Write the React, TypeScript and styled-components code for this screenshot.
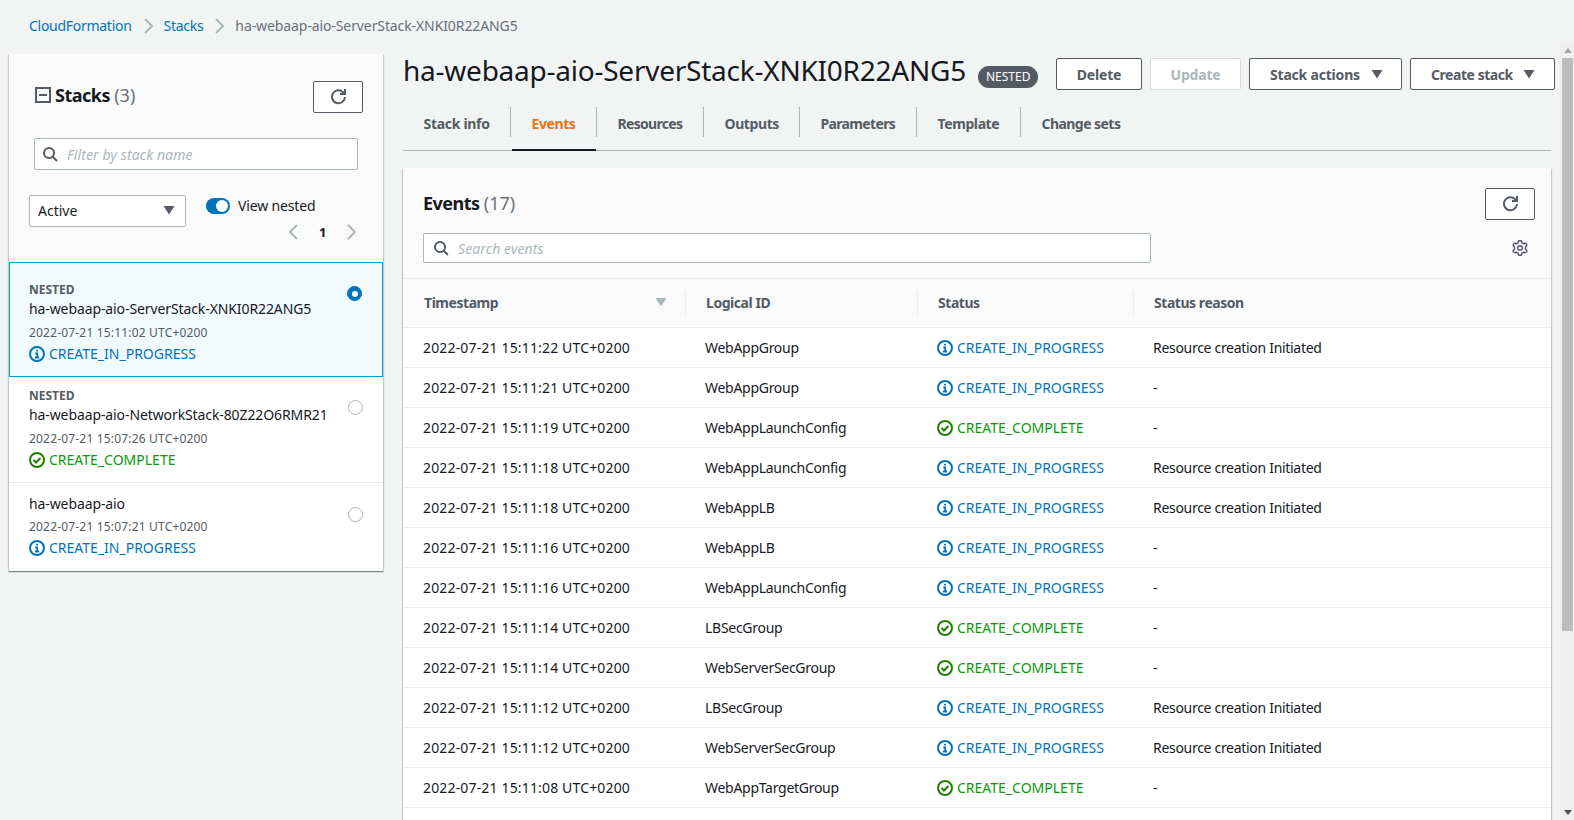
import React from "react";
import styled, { createGlobalStyle } from "styled-components";
import { Settings } from "lucide-react";

const Global = createGlobalStyle`
  html, body { margin: 0; padding: 0; height: 100%; overflow: hidden; }
  body { background: #f2f3f3; font-family: "Noto Sans", "Open Sans", sans-serif; font-size: 14px; color: #16191f; }
  * { box-sizing: border-box; }
`;

const Page = styled.div`
  width: 1574px;
  height: 820px;
  display: flex;
  flex-direction: column;
  overflow: hidden;
  background: #f2f3f3;
`;
const Crumbs = styled.nav`
  height: 43px;
  flex: none;
  padding: 9px 0 0 29px;
  display: flex;
  align-items: center;
  font-size: 14px;
  line-height: 20px;
  letter-spacing: -0.1px;
  color: #687078;
`;
const CrumbLink = styled.a`
  color: #0073bb;
  letter-spacing: -0.28px;
`;
const CrumbSep = styled.svg`
  width: 16px;
  height: 16px;
  margin: 0 7px 0 9px;
  fill: none;
  stroke: #aab7b8;
  stroke-width: 2;
`;
const Body = styled.div`
  flex: 1;
  min-height: 0;
  display: flex;
`;
const Content = styled.div`
  flex: 1;
  min-width: 0;
  display: flex;
  align-items: flex-start;
  padding: 11px 9px 0 9px;
  gap: 20px;
`;
const ScrollTrack = styled.div`
  width: 14px;
  flex: none;
  background: #efefef;
  display: flex;
  flex-direction: column;
  align-items: center;
  padding: 0 1px 0 2px;
`;
const ScrollButton = styled.div`
  height: 15px;
  flex: none;
  display: flex;
  align-items: center;
  justify-content: center;
`;
const ScrollThumb = styled.div`
  width: 100%;
  height: 573px;
  flex: none;
  background: #bcbcbc;
`;
const ScrollRest = styled.div`
  flex: 1;
`;

const SidePanel = styled.aside`
  width: 374px;
  flex: none;
  background: #fff;
  box-shadow: 0 1px 1px 0 rgba(0, 28, 36, 0.3), 1px 1px 1px 0 rgba(0, 28, 36, 0.15), -1px 1px 1px 0 rgba(0, 28, 36, 0.15);
`;
const SideHead = styled.div`
  height: 208px;
  background: #fafafa;
  padding-top: 27px;
`;
const TitleRow = styled.div`
  height: 32px;
  display: flex;
  align-items: center;
  justify-content: space-between;
  padding: 0 20px 0 26px;
`;
const TitleGroup = styled.div`
  display: flex;
  align-items: center;
  gap: 4px;
  margin-top: -4px;
`;
const SquareIcon = styled.span`
  color: #545b64;
  display: flex;
`;
const PanelTitle = styled.h2`
  margin: 0;
  font-size: 18px;
  line-height: 28px;
  font-weight: 700;
  letter-spacing: -0.5px;
  color: #16191f;
`;
const Count = styled.span`
  font-weight: 400;
  letter-spacing: 0;
  color: #687078;
`;
const IconButton = styled.button`
  width: 50px;
  height: 32px;
  border: 1px solid #545b64;
  border-radius: 2px;
  background: #fff;
  display: flex;
  align-items: center;
  justify-content: center;
  padding: 0;
  color: #545b64;
`;
const SearchBox = styled.div<{ $w: number; $h: number; $pad: number }>`
  width: ${(p) => p.$w}px;
  height: ${(p) => p.$h}px;
  border: 1px solid #aab7b8;
  border-radius: 2px;
  background: #fff;
  display: flex;
  align-items: center;
  padding-left: ${(p) => p.$pad}px;
  gap: 9px;
  color: #545b64;
`;
const Placeholder = styled.span`
  font-style: italic;
  font-size: 14px;
  letter-spacing: 0.1px;
  color: #aab7b8;
`;
const SideSearch = styled.div`
  margin: 25px 0 0 25px;
`;
const FilterRow = styled.div`
  display: flex;
  margin: 25px 0 0 20px;
  gap: 20px;
`;
const Select = styled.div`
  width: 157px;
  height: 32px;
  border: 1px solid #aab7b8;
  border-radius: 2px;
  background: #fff;
  display: flex;
  align-items: center;
  justify-content: space-between;
  padding: 0 8px 2px;
  color: #16191f;
`;
const FilterSide = styled.div`
  display: flex;
  flex-direction: column;
`;
const ToggleRow = styled.div`
  display: flex;
  align-items: center;
  gap: 8px;
  line-height: 22px;
  letter-spacing: -0.15px;
`;
const ToggleTrack = styled.div`
  width: 24px;
  height: 16px;
  border-radius: 8px;
  background: #0073bb;
  display: flex;
  align-items: center;
  justify-content: flex-end;
  padding-right: 2px;
`;
const ToggleKnob = styled.div`
  width: 12px;
  height: 12px;
  border-radius: 50%;
  background: #fff;
`;
const Pager = styled.div`
  display: flex;
  align-items: center;
  gap: 18px;
  margin: 6px 0 0 79px;
  width: 76px;
  font-size: 13px;
  font-weight: 700;
`;
const StackItem = styled.div<{ $selected?: boolean; $h: number }>`
  height: ${(p) => p.$h}px;
  display: flex;
  justify-content: space-between;
  padding: ${(p) => (p.$selected ? "18px 20px 0 19px" : "10px 20px 0 20px")};
  background: ${(p) => (p.$selected ? "#f1faff" : "#fff")};
  border: ${(p) => (p.$selected ? "1px solid #00a1c9" : "none")};
  border-bottom: ${(p) => (p.$selected ? "1px solid #00a1c9" : "1px solid #eaeded")};
  &:last-child { border-bottom: none; }
`;
const StackText = styled.div`
  display: flex;
  flex-direction: column;
`;
const NestedLabel = styled.div`
  font-size: 12px;
  line-height: 17px;
  font-weight: 700;
  color: #545b64;
`;
const StackName = styled.div`
  font-size: 14px;
  line-height: 22px;
  letter-spacing: -0.1px;
  color: #16191f;
`;
const StackDate = styled.div<{ $tight?: boolean }>`
  font-size: 12px;
  line-height: 16px;
  letter-spacing: 0.18px;
  color: #545b64;
  margin-top: ${(p) => (p.$tight ? "4px" : "5px")};
`;
const StackStatus = styled.div`
  margin-top: 3px;
`;
const Radio = styled.div<{ $on?: boolean; $top: number }>`
  width: 15px;
  height: 15px;
  flex: none;
  border-radius: 50%;
  margin-top: ${(p) => p.$top}px;
  background: ${(p) => (p.$on ? "#0073bb" : "#fff")};
  border: 1px solid ${(p) => (p.$on ? "#0073bb" : "#aab7b8")};
  display: flex;
  align-items: center;
  justify-content: center;
  &::after {
    content: "";
    display: ${(p) => (p.$on ? "block" : "none")};
    width: 6px;
    height: 6px;
    border-radius: 50%;
    background: #fff;
  }
`;
const StatusLine = styled.div<{ $kind: "info" | "ok" }>`
  display: flex;
  align-items: center;
  gap: 4px;
  font-size: 14px;
  line-height: 20px;
  letter-spacing: 0;
  color: ${(p) => (p.$kind === "info" ? "#0073bb" : "#0a9a0a")};
  svg { flex: none; }
`;

const MainCol = styled.main`
  flex: 1;
  min-width: 0;
  display: flex;
  flex-direction: column;
  margin-top: -11px;
`;
const HeadRow = styled.div`
  height: 64px;
  display: flex;
  align-items: flex-start;
`;
const PageTitle = styled.h1`
  margin: 8px 0 0 0;
  font-size: 28px;
  line-height: 38px;
  font-weight: 400;
  letter-spacing: -0.24px;
  color: #16191f;
  white-space: nowrap;
`;
const Badge = styled.span`
  margin: 23px 0 0 12px;
  height: 22px;
  padding: 0 8px;
  border-radius: 11px;
  background: #545b64;
  color: #fff;
  font-size: 12px;
  line-height: 22px;
`;
const HeadButtons = styled.div`
  margin: 15px -4px 0 auto;
  display: flex;
  gap: 8px;
`;
const Button = styled.button<{ $w: number; $disabled?: boolean; $menu?: boolean; $ls?: number; $gap?: number }>`
  width: ${(p) => p.$w}px;
  height: 32px;
  flex: none;
  border: 1px solid ${(p) => (p.$disabled ? "#d5dbdb" : "#545b64")};
  border-radius: 2px;
  background: #fff;
  color: ${(p) => (p.$disabled ? "#aab7b8" : "#545b64")};
  font-family: inherit;
  font-size: 14px;
  font-weight: 700;
  letter-spacing: ${(p) => p.$ls ?? -0.2}px;
  display: flex;
  align-items: center;
  justify-content: ${(p) => (p.$menu ? "flex-start" : "center")};
  gap: ${(p) => p.$gap ?? 9}px;
  padding: ${(p) => (p.$menu ? "0 0 0 20px" : "0")};
`;
const Tabs = styled.div`
  height: 44px;
  display: flex;
  align-items: stretch;
  border-bottom: 1px solid #aab7b8;
`;
const Tab = styled.div<{ $w: number; $ls: number; $active?: boolean; $last?: boolean }>`
  width: ${(p) => p.$w}px;
  flex: none;
  height: 44px;
  margin-bottom: -1px;
  display: flex;
  align-items: flex-start;
  padding: 7px 0 0 20.5px;
  font-weight: 700;
  font-size: 14px;
  line-height: 20px;
  letter-spacing: ${(p) => p.$ls}px;
  color: ${(p) => (p.$active ? "#ec7211" : "#545b64")};
  position: relative;
  &::after {
    content: "";
    display: ${(p) => (p.$last ? "none" : "block")};
    position: absolute;
    right: 0;
    top: 0;
    width: 1px;
    height: 30px;
    background: #aab7b8;
  }
  &::before {
    content: "";
    display: ${(p) => (p.$active ? "block" : "none")};
    position: absolute;
    left: 1px;
    right: 1px;
    bottom: 0;
    height: 2px;
    background: #16191f;
  }
`;
const Card = styled.section`
  margin-top: 17px;
  background: #fff;
  box-shadow: 0 1px 1px 0 rgba(0, 28, 36, 0.3), 1px 1px 1px 0 rgba(0, 28, 36, 0.15), -1px 1px 1px 0 rgba(0, 28, 36, 0.15);
`;
const CardHead = styled.div`
  height: 110px;
  background: #fafafa;
`;
const CardTop = styled.div`
  display: flex;
  justify-content: space-between;
  padding: 20px 16px 0 20px;
  height: 65px;
`;
const CardTitleWrap = styled.div`
  padding-top: 1px;
`;
const CardTools = styled.div`
  display: flex;
  align-items: center;
  justify-content: space-between;
  padding: 0 22px 0 20px;
  height: 30px;
`;
const GearWrap = styled.div`
  color: #545b64;
  display: flex;
`;
const Columns = "283px 232px 216px 1fr";
const HeadGrid = styled.div`
  height: 50px;
  display: grid;
  grid-template-columns: ${Columns};
  align-items: center;
  background: #fafafa;
  border-top: 1px solid #eaeded;
  border-bottom: 1px solid #eaeded;
`;
const HeadCell = styled.div<{ $last?: boolean }>`
  height: 24px;
  display: flex;
  align-items: center;
  justify-content: space-between;
  padding: 0 16px 2px 20px;
  font-weight: 700;
  font-size: 14px;
  letter-spacing: -0.45px;
  color: #545b64;
  border-right: ${(p) => (p.$last ? "none" : "1px solid #eaeded")};
  &:first-child { padding-left: 21px; }
`;
const Row = styled.div`
  height: 40px;
  display: grid;
  grid-template-columns: ${Columns};
  align-items: center;
  border-bottom: 1px solid #eaeded;
  background: #fff;
`;
const Cell = styled.div<{ $pad: number; $ls?: number }>`
  padding-left: ${(p) => p.$pad}px;
  font-size: 14px;
  line-height: 20px;
  letter-spacing: ${(p) => p.$ls ?? 0}px;
  color: #16191f;
  white-space: nowrap;
`;

const I = ({ s = 16, children }: { s?: number; children: React.ReactNode }) => (
  <svg width={s} height={s} viewBox="0 0 16 16" fill="none" stroke="currentColor" strokeWidth={2}>
    {children}
  </svg>
);
const SearchIcon = () => (
  <I>
    <circle cx="7" cy="7" r="5" />
    <path d="M15 15l-4.5-4.5" />
  </I>
);
const RefreshIcon = () => (
  <I>
    <path d="M10 5h5V0" />
    <path d="M15 8a6.5 6.5 0 1 1-2-4.9L15 5" />
  </I>
);
const Caret = ({ c = "#545b64" }: { c?: string }) => (
  <svg width="16" height="16" viewBox="0 0 16 16" fill={c}>
    <path d="M2.5 4h11L8 12.5z" />
  </svg>
);
const ChevL = ({ c = "#aab7b8" }: { c?: string }) => (
  <svg width="16" height="16" viewBox="0 0 16 16" fill="none" stroke={c} strokeWidth="2">
    <path d="M12 1L5 8l7 7" />
  </svg>
);
const ChevR = ({ c = "#aab7b8" }: { c?: string }) => (
  <svg width="16" height="16" viewBox="0 0 16 16" fill="none" stroke={c} strokeWidth="2">
    <path d="M4 1l7 7-7 7" />
  </svg>
);
const Status = ({ kind }: { kind: "info" | "ok" }) => (
  <StatusLine $kind={kind}>
    {kind === "info" ? (
      <svg width="16" height="16" viewBox="0 0 16 16" fill="none" stroke="#0073bb" strokeWidth="2">
        <circle cx="8" cy="8" r="7" />
        <path d="M8 3.8v1.8M6.3 7.5H8.2V11.5M6 11.5h4.2" strokeWidth="1.8" />
      </svg>
    ) : (
      <svg width="16" height="16" viewBox="0 0 16 16" fill="none" stroke="#1d8102" strokeWidth="2">
        <circle cx="8" cy="8" r="7" />
        <path d="M4.5 8l2.5 2.5L11.5 6" />
      </svg>
    )}
    {kind === "info" ? "CREATE_IN_PROGRESS" : "CREATE_COMPLETE"}
  </StatusLine>
);

const R = "Resource creation Initiated";
const events: [string, string, "info" | "ok", string][] = [
  ["2022-07-21 15:11:22 UTC+0200", "WebAppGroup", "info", R],
  ["2022-07-21 15:11:21 UTC+0200", "WebAppGroup", "info", "-"],
  ["2022-07-21 15:11:19 UTC+0200", "WebAppLaunchConfig", "ok", "-"],
  ["2022-07-21 15:11:18 UTC+0200", "WebAppLaunchConfig", "info", R],
  ["2022-07-21 15:11:18 UTC+0200", "WebAppLB", "info", R],
  ["2022-07-21 15:11:16 UTC+0200", "WebAppLB", "info", "-"],
  ["2022-07-21 15:11:16 UTC+0200", "WebAppLaunchConfig", "info", "-"],
  ["2022-07-21 15:11:14 UTC+0200", "LBSecGroup", "ok", "-"],
  ["2022-07-21 15:11:14 UTC+0200", "WebServerSecGroup", "ok", "-"],
  ["2022-07-21 15:11:12 UTC+0200", "LBSecGroup", "info", R],
  ["2022-07-21 15:11:12 UTC+0200", "WebServerSecGroup", "info", R],
  ["2022-07-21 15:11:08 UTC+0200", "WebAppTargetGroup", "ok", "-"],
];
const tabs: [string, number, number][] = [
  ["Stack info", 108, -0.3],
  ["Events", 86, -0.4],
  ["Resources", 107, -0.7],
  ["Outputs", 96, -0.4],
  ["Parameters", 117, -0.65],
  ["Template", 104, -0.4],
  ["Change sets", 130, -0.55],
];

export default function App() {
  return (
    <Page>
      <Global />
      <Crumbs>
        <CrumbLink>CloudFormation</CrumbLink>
        <CrumbSep viewBox="0 0 16 16"><path d="M4 1l7 7-7 7" /></CrumbSep>
        <CrumbLink>Stacks</CrumbLink>
        <CrumbSep viewBox="0 0 16 16"><path d="M4 1l7 7-7 7" /></CrumbSep>
        <span>ha-webaap-aio-ServerStack-XNKI0R22ANG5</span>
      </Crumbs>
      <Body>
        <Content>
          <SidePanel>
            <SideHead>
              <TitleRow>
                <TitleGroup>
                  <SquareIcon>
                    <I>
                      <rect x="1" y="1" width="14" height="14" />
                      <path d="M4 8h8" />
                    </I>
                  </SquareIcon>
                  <PanelTitle>Stacks <Count>(3)</Count></PanelTitle>
                </TitleGroup>
                <IconButton><RefreshIcon /></IconButton>
              </TitleRow>
              <SideSearch>
                <SearchBox $w={324} $h={32} $pad={7}>
                  <SearchIcon />
                  <Placeholder>Filter by stack name</Placeholder>
                </SearchBox>
              </SideSearch>
              <FilterRow>
                <Select>Active<Caret /></Select>
                <FilterSide>
                  <ToggleRow>
                    <ToggleTrack><ToggleKnob /></ToggleTrack>
                    View nested
                  </ToggleRow>
                  <Pager>
                    <ChevL />
                    <span>1</span>
                    <ChevR />
                  </Pager>
                </FilterSide>
              </FilterRow>
            </SideHead>
            <StackItem $selected $h={115}>
              <StackText>
                <NestedLabel>NESTED</NestedLabel>
                <StackName>ha-webaap-aio-ServerStack-XNKI0R22ANG5</StackName>
                <StackDate>2022-07-21 15:11:02 UTC+0200</StackDate>
                <StackStatus><Status kind="info" /></StackStatus>
              </StackText>
              <Radio $on $top={5} />
            </StackItem>
            <StackItem $h={106}>
              <StackText>
                <NestedLabel>NESTED</NestedLabel>
                <StackName>ha-webaap-aio-NetworkStack-80Z22O6RMR21</StackName>
                <StackDate>2022-07-21 15:07:26 UTC+0200</StackDate>
                <StackStatus><Status kind="ok" /></StackStatus>
              </StackText>
              <Radio $top={13} />
            </StackItem>
            <StackItem $h={88}>
              <StackText>
                <StackName>ha-webaap-aio</StackName>
                <StackDate $tight>2022-07-21 15:07:21 UTC+0200</StackDate>
                <StackStatus><Status kind="info" /></StackStatus>
              </StackText>
              <Radio $top={14} />
            </StackItem>
          </SidePanel>
          <MainCol>
            <HeadRow>
              <PageTitle>ha-webaap-aio-ServerStack-XNKI0R22ANG5</PageTitle>
              <Badge>NESTED</Badge>
              <HeadButtons>
                <Button $w={86}>Delete</Button>
                <Button $w={91} $disabled>Update</Button>
                <Button $w={153} $menu>Stack actions<Caret /></Button>
                <Button $w={145} $menu $ls={-0.45} $gap={8}>Create stack<Caret /></Button>
              </HeadButtons>
            </HeadRow>
            <Tabs>
              {tabs.map(([t, w, ls], i) => (
                <Tab key={t} $w={w} $ls={ls} $active={t === "Events"} $last={i === tabs.length - 1}>{t}</Tab>
              ))}
            </Tabs>
            <Card>
              <CardHead>
                <CardTop>
                  <CardTitleWrap>
                    <PanelTitle>Events <Count>(17)</Count></PanelTitle>
                  </CardTitleWrap>
                  <IconButton><RefreshIcon /></IconButton>
                </CardTop>
                <CardTools>
                  <SearchBox $w={728} $h={30} $pad={9}>
                    <SearchIcon />
                    <Placeholder>Search events</Placeholder>
                  </SearchBox>
                  <GearWrap><Settings size={18} strokeWidth={2} /></GearWrap>
                </CardTools>
              </CardHead>
              <HeadGrid>
                <HeadCell>Timestamp<Caret c="#aab7b8" /></HeadCell>
                <HeadCell>Logical ID</HeadCell>
                <HeadCell>Status</HeadCell>
                <HeadCell $last>Status reason</HeadCell>
              </HeadGrid>
              {events.map((e, i) => (
                <Row key={i}>
                  <Cell $pad={20} $ls={0.16}>{e[0]}</Cell>
                  <Cell $pad={19} $ls={-0.28}>{e[1]}</Cell>
                  <Cell $pad={19}><Status kind={e[2]} /></Cell>
                  <Cell $pad={19} $ls={-0.3}>{e[3]}</Cell>
                </Row>
              ))}
              <Row />
            </Card>
          </MainCol>
        </Content>
        <ScrollTrack>
          <ScrollButton>
            <svg width="8" height="5" viewBox="0 0 8 5" fill="#a3a3a3"><path d="M4 0l4 5H0z" /></svg>
          </ScrollButton>
          <ScrollThumb />
          <ScrollRest />
          <ScrollButton>
            <svg width="8" height="5" viewBox="0 0 8 5" fill="#505050"><path d="M0 0h8L4 5z" /></svg>
          </ScrollButton>
        </ScrollTrack>
      </Body>
    </Page>
  );
}
